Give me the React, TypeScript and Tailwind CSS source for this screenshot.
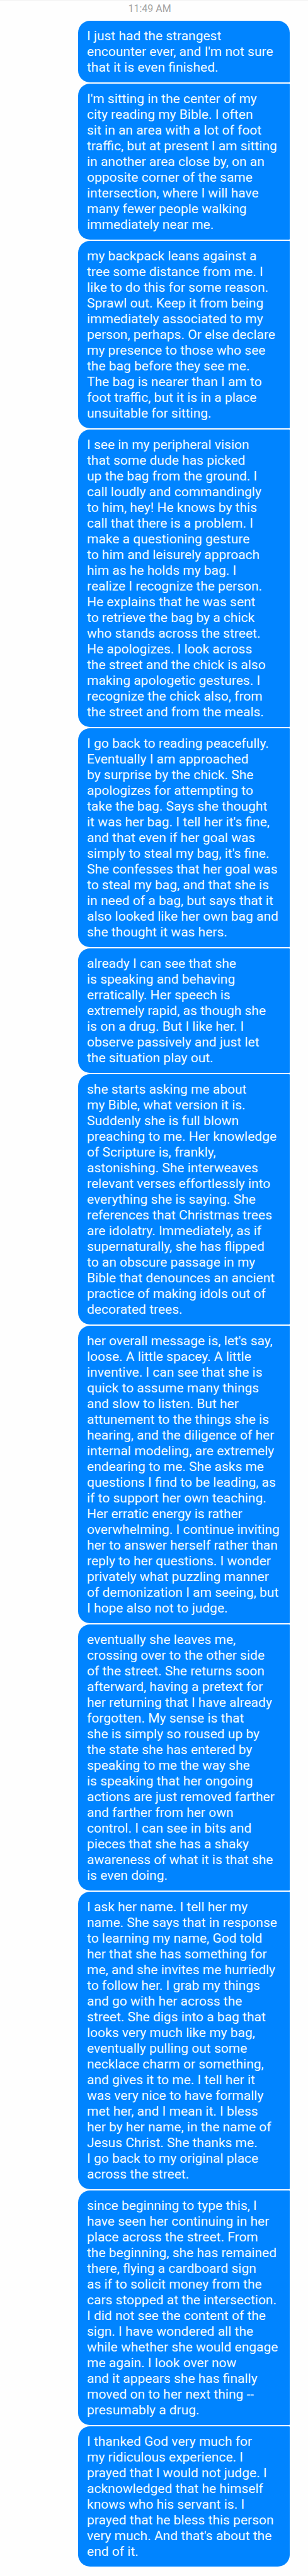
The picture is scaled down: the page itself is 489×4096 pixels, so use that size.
const messages: string[] = [
  `I just had the strangest
encounter ever, and I'm not sure
that it is even finished.`,
  `I'm sitting in the center of my
city reading my Bible. I often
sit in an area with a lot of foot
traffic, but at present I am sitting
in another area close by, on an
opposite corner of the same
intersection, where I will have
many fewer people walking
immediately near me.`,
  `my backpack leans against a
tree some distance from me. I
like to do this for some reason.
Sprawl out. Keep it from being
immediately associated to my
person, perhaps. Or else declare
my presence to those who see
the bag before they see me.
The bag is nearer than I am to
foot traffic, but it is in a place
unsuitable for sitting.`,
  `I see in my peripheral vision
that some dude has picked
up the bag from the ground. I
call loudly and commandingly
to him, hey! He knows by this
call that there is a problem. I
make a questioning gesture
to him and leisurely approach
him as he holds my bag. I
realize I recognize the person.
He explains that he was sent
to retrieve the bag by a chick
who stands across the street.
He apologizes. I look across
the street and the chick is also
making apologetic gestures. I
recognize the chick also, from
the street and from the meals.`,
  `I go back to reading peacefully.
Eventually I am approached
by surprise by the chick. She
apologizes for attempting to
take the bag. Says she thought
it was her bag. I tell her it's fine,
and that even if her goal was
simply to steal my bag, it's fine.
She confesses that her goal was
to steal my bag, and that she is
in need of a bag, but says that it
also looked like her own bag and
she thought it was hers.`,
  `already I can see that she
is speaking and behaving
erratically. Her speech is
extremely rapid, as though she
is on a drug. But I like her. I
observe passively and just let
the situation play out.`,
  `she starts asking me about
my Bible, what version it is.
Suddenly she is full blown
preaching to me. Her knowledge
of Scripture is, frankly,
astonishing. She interweaves
relevant verses effortlessly into
everything she is saying. She
references that Christmas trees
are idolatry. Immediately, as if
supernaturally, she has flipped
to an obscure passage in my
Bible that denounces an ancient
practice of making idols out of
decorated trees.`,
  `her overall message is, let's say,
loose. A little spacey. A little
inventive. I can see that she is
quick to assume many things
and slow to listen. But her
attunement to the things she is
hearing, and the diligence of her
internal modeling, are extremely
endearing to me. She asks me
questions I find to be leading, as
if to support her own teaching.
Her erratic energy is rather
overwhelming. I continue inviting
her to answer herself rather than
reply to her questions. I wonder
privately what puzzling manner
of demonization I am seeing, but
I hope also not to judge.`,
  `eventually she leaves me,
crossing over to the other side
of the street. She returns soon
afterward, having a pretext for
her returning that I have already
forgotten. My sense is that
she is simply so roused up by
the state she has entered by
speaking to me the way she
is speaking that her ongoing
actions are just removed farther
and farther from her own
control. I can see in bits and
pieces that she has a shaky
awareness of what it is that she
is even doing.`,
  `I ask her name. I tell her my
name. She says that in response
to learning my name, God told
her that she has something for
me, and she invites me hurriedly
to follow her. I grab my things
and go with her across the
street. She digs into a bag that
looks very much like my bag,
eventually pulling out some
necklace charm or something,
and gives it to me. I tell her it
was very nice to have formally
met her, and I mean it. I bless
her by her name, in the name of
Jesus Christ. She thanks me.
I go back to my original place
across the street.`,
  `since beginning to type this, I
have seen her continuing in her
place across the street. From
the beginning, she has remained
there, flying a cardboard sign
as if to solicit money from the
cars stopped at the intersection.
I did not see the content of the
sign. I have wondered all the
while whether she would engage
me again. I look over now
and it appears she has finally
moved on to her next thing --
presumably a drug.`,
  `I thanked God very much for
my ridiculous experience. I
prayed that I would not judge. I
acknowledged that he himself
knows who his servant is. I
prayed that he bless this person
very much. And that's about the
end of it.`,
];

function Bubble({ text }: { text: string }) {
  return (
    <li className="rounded-l-[19px] rounded-r-[1px] bg-[#0084ff] pt-[12px] pr-[4px] pb-[11px] pl-[14px] text-[21px] leading-[25px] whitespace-pre-line text-[#f2fcff] first:rounded-tr-[19px] last:rounded-br-[19px]">
      {text}
    </li>
  );
}

export default function App() {
  return (
    <main className="min-h-screen border-t border-[#f2f2f2] bg-[#fefefe] font-['Roboto',sans-serif]">
      <time className="block pt-[3px] pr-[14px] text-center text-[16px] leading-[20px] text-[#a3a3a3]">11:49 AM</time>
      <ol className="mt-[9px] mr-[29px] ml-auto flex w-[336px] flex-col gap-[2px] pb-[10px]">
        {messages.map((text) => (
          <Bubble key={text} text={text} />
        ))}
      </ol>
    </main>
  );
}
